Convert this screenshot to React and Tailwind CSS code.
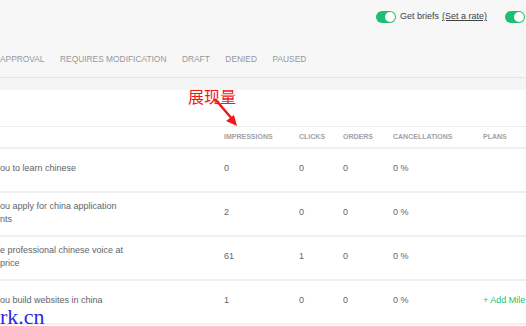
import React from "react";

const rows = [
  { title: ["ou to learn chinese"], impressions: "0", clicks: "0", orders: "0", cancel: "0 %" },
  { title: ["ou apply for china application", "nts"], impressions: "2", clicks: "0", orders: "0", cancel: "0 %" },
  { title: ["e professional chinese voice at", "price"], impressions: "61", clicks: "1", orders: "0", cancel: "0 %" },
  { title: ["ou build websites in china"], impressions: "1", clicks: "0", orders: "0", cancel: "0 %", plan: true },
];

const tabs = ["APPROVAL", "REQUIRES MODIFICATION", "DRAFT", "DENIED", "PAUSED"];

function Toggle() {
  return (
    <div className="w-[20px] h-[12px] rounded-full bg-[#1dbf73] flex items-center justify-end pr-[1px]">
      <div className="w-[10px] h-[10px] rounded-full bg-white" />
    </div>
  );
}

export default function App() {
  return (
    <div className="relative w-[526px] h-[326px] overflow-hidden bg-white font-['Liberation_Sans',sans-serif]">
      {/* top bar */}
      <div className="h-[78px] bg-[#f7f7f7] border-b border-[#e4e5e7]">
        <div className="flex items-center justify-end h-[34px] pr-[1px]">
          <Toggle />
          <span className="ml-[4px] text-[9px] text-[#404145]">Get briefs</span>
          <span className="ml-[3px] text-[9px] text-[#404145] underline">(Set a rate)</span>
          <div className="ml-[18px]">
            <Toggle />
          </div>
        </div>
        <div className="flex gap-[15.5px] mt-[19px] text-[8.4px] text-[#95979d]">
          {tabs.map((t) => (
            <span key={t}>{t}</span>
          ))}
        </div>
      </div>
      <div className="h-[12px] bg-[#f5f5f5]" />

      {/* table */}
      <div className="h-[37px] border-b border-[#ececec]" />
      <div className="grid grid-cols-[224px_75px_44px_50px_90px_1fr] items-center h-[22px] border-b-2 border-[#efefef] text-[7px] font-bold text-[#a0a2a7]">
        <span />
        <span>IMPRESSIONS</span>
        <span>CLICKS</span>
        <span>ORDERS</span>
        <span>CANCELLATIONS</span>
        <span>PLANS</span>
      </div>
      {rows.map((r, i) => (
        <div
          key={i}
          className="grid grid-cols-[224px_75px_44px_50px_90px_1fr] items-center h-[44px] pb-[3px] border-b-2 border-[#efefef] text-[9px] text-[#62646a]"
        >
          <div className="leading-[13px]">
            {r.title.map((l) => (
              <div key={l}>{l}</div>
            ))}
          </div>
          <span>{r.impressions}</span>
          <span>{r.clicks}</span>
          <span>{r.orders}</span>
          <span>{r.cancel}</span>
          <span className="text-[#1dbf73] whitespace-nowrap">{r.plan ? "+ Add Milestones" : ""}</span>
        </div>
      ))}

      {/* annotation */}
      <span className="absolute left-[188px] top-[86px] text-[16px] leading-[20px] text-[#f01818] font-['Noto_Sans_CJK_SC',sans-serif]">
        展现量
      </span>
      <svg className="absolute left-[200px] top-[95px]" width="45" height="35" viewBox="0 0 45 35">
        <path d="M15 4 L33 25" stroke="#f01818" strokeWidth="2.5" />
        <path d="M37 31 L26 26 L34 20 Z" fill="#f01818" />
      </svg>

      {/* watermark */}
      <span className="absolute left-0 top-[305px] text-[22px] leading-[24px] text-[#2b2bd9] font-['Liberation_Serif',serif]">
        rk.cn
      </span>
    </div>
  );
}
